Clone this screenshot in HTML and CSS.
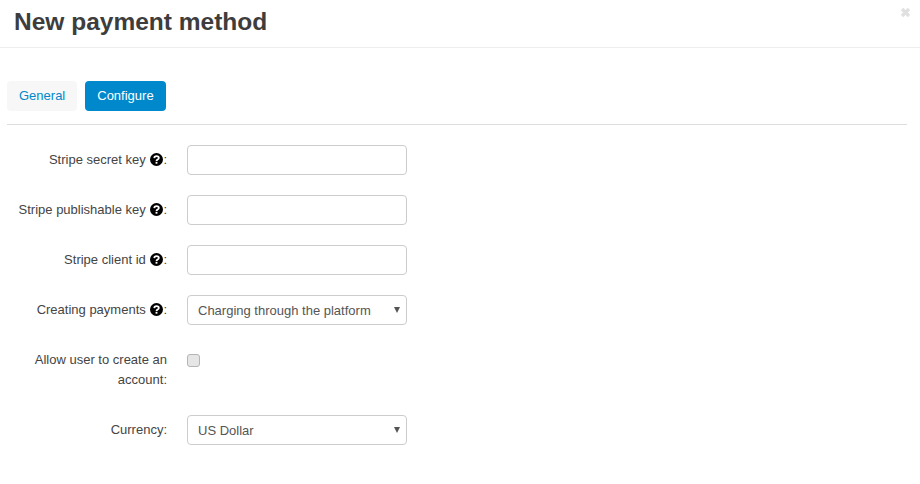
FILE: index.html
```html
<!DOCTYPE html>
<html lang="en">
<head>
    <meta charset="UTF-8">
    <meta name="viewport" content="width=device-width, initial-scale=1.0">
    <title>New payment method</title>
    <link rel="stylesheet" href="styles.css">
</head>
<body>
    <svg class="defs" width="0" height="0">
        <symbol id="icon-help" viewBox="0 0 14 14">
            <circle cx="7" cy="7" r="7" fill="#000"/>
            <path d="M4.6 5.5c.1-1.4 1.1-2.1 2.4-2.1s2.5.8 2.5 2c0 1.7-2.5 1.7-2.5 3.2" fill="none" stroke="#fff" stroke-width="1.9"/>
            <rect x="6" y="9.5" width="2" height="2" fill="#fff"/>
        </symbol>
    </svg>

    <header class="modal-header">
        <h1>New payment method</h1>
        <button class="close" type="button" aria-label="Close">
            <svg width="11" height="11" viewBox="0 0 11 11"><path d="M2 2l7 7M9 2l-7 7"/></svg>
        </button>
    </header>

    <div class="modal-body">
        <nav class="tabs">
            <a class="tab" href="#">General</a>
            <a class="tab active" href="#">Configure</a>
        </nav>

        <form class="form">
            <div class="row">
                <label for="secretKey">Stripe secret key <svg class="help"><use href="#icon-help"/></svg>:</label>
                <input type="text" id="secretKey">
            </div>
            <div class="row">
                <label for="publishableKey">Stripe publishable key <svg class="help"><use href="#icon-help"/></svg>:</label>
                <input type="text" id="publishableKey">
            </div>
            <div class="row">
                <label for="clientId">Stripe client id <svg class="help"><use href="#icon-help"/></svg>:</label>
                <input type="text" id="clientId">
            </div>
            <div class="row">
                <label for="creating">Creating payments <svg class="help"><use href="#icon-help"/></svg>:</label>
                <div class="select">
                    <select id="creating">
                        <option>Charging through the platform</option>
                    </select>
                </div>
            </div>
            <div class="row row-check">
                <label for="allowAccount">Allow user to create an account:</label>
                <input type="checkbox" id="allowAccount">
            </div>
            <div class="row">
                <label for="currency">Currency:</label>
                <div class="select">
                    <select id="currency">
                        <option>US Dollar</option>
                    </select>
                </div>
            </div>
        </form>
    </div>
</body>
</html>
```

FILE: styles.css
```css
body {
    margin: 0;
    background-color: white;
    color: #444;
    font-family: "Liberation Sans", Arial, sans-serif;
    font-size: 13px;
    line-height: 20px;
}

.defs {
    display: block;
}

.modal-header {
    position: relative;
    height: 47px;
    padding-left: 14px;
    border-bottom: 1px solid #eee;
}

.modal-header h1 {
    margin: 0;
    color: #3d3d3d;
    font-size: 24.5px;
    line-height: 44px;
    font-weight: bold;
}

.close {
    position: absolute;
    top: 7px;
    right: 9px;
    padding: 0;
    border: 0;
    background: none;
    line-height: 0;
}

.close path {
    fill: none;
    stroke: #e0e0e0;
    stroke-width: 3.4;
}

.modal-body {
    padding: 33px 13px 0 7px;
}

.tabs {
    display: flex;
    gap: 8px;
    padding-bottom: 13px;
    border-bottom: 1px solid #ddd;
}

.tab {
    padding: 5px 12px;
    border-radius: 4px;
    background-color: #f7f7f7;
    color: #0088cc;
    text-decoration: none;
}

.tab.active {
    background-color: #0088cc;
    color: white;
}

.form {
    padding-top: 20px;
}

.row {
    display: flex;
    align-items: center;
    gap: 20px;
    margin-bottom: 20px;
}

.row label {
    width: 160px;
    text-align: right;
}

.help {
    width: 13px;
    height: 13px;
    margin-left: 1px;
    vertical-align: -2px;
}

.select {
    position: relative;
}

/* native arrow replaced, it is drawn too wide by the browser */
.select::after {
    content: "";
    position: absolute;
    top: 12px;
    right: 7px;
    border-top: 6px solid #555;
    border-left: 3px solid transparent;
    border-right: 3px solid transparent;
    pointer-events: none;
}

.row input[type="text"],
.row select {
    display: block;
    box-sizing: border-box;
    width: 220px;
    height: 30px;
    margin: 0;
    padding: 4px 10px;
    border: 1px solid #ccc;
    border-radius: 4px;
    background-color: white;
    color: #555;
    font-family: inherit;
    font-size: 13px;
    appearance: none;
}

.row-check {
    align-items: flex-start;
    margin-top: 25px;
    margin-bottom: 25px;
}

.row-check input {
    box-sizing: border-box;
    width: 13px;
    height: 13px;
    margin: 4px 0 0;
    border: 1px solid #b5b5b5;
    border-radius: 3px;
    background-color: #e6e6e6;
    appearance: none;
}
```
